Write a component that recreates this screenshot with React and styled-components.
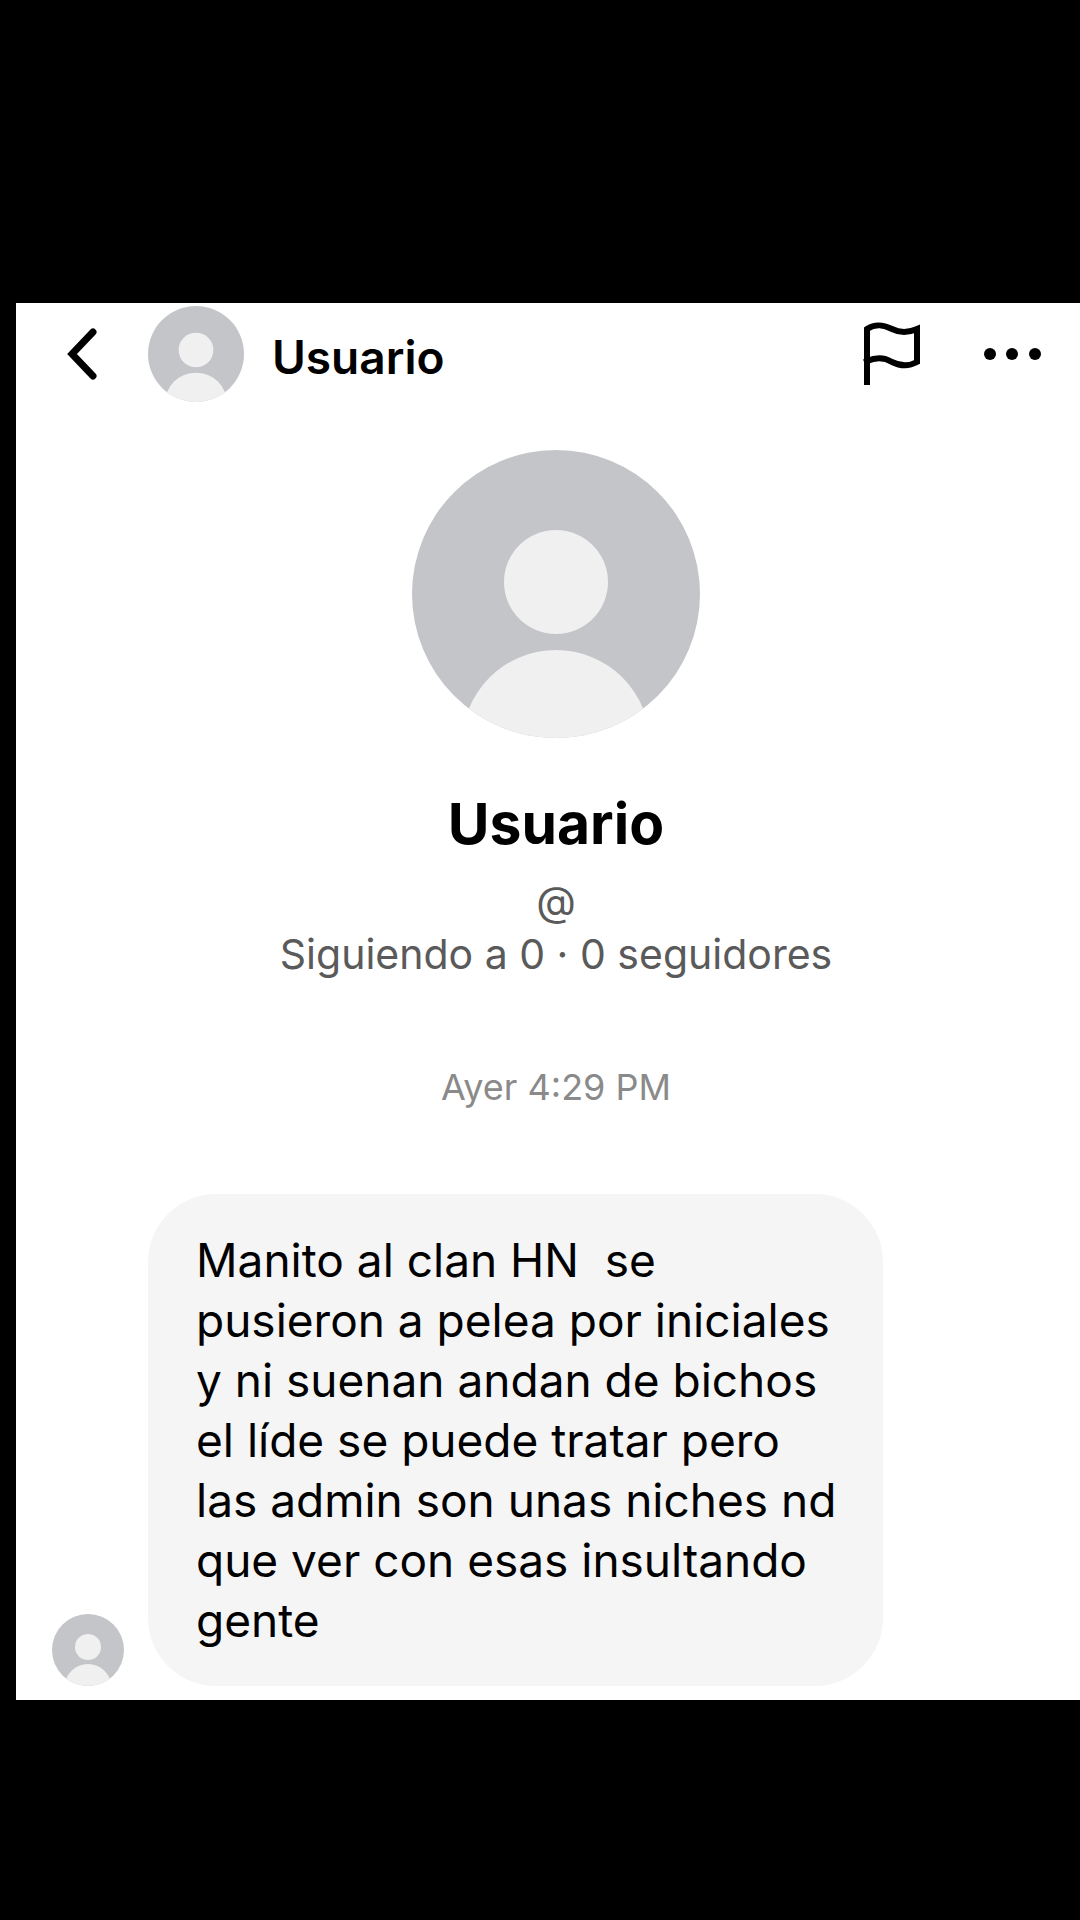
import React from "react";
import styled, { createGlobalStyle } from "styled-components";

const message =
  "Manito al clan HN  se pusieron a pelea por iniciales y ni suenan andan de bichos el líde se puede tratar pero las admin son unas niches nd que ver con esas insultando gente";

function UserAvatar({ size, id }) {
  return (
    <Avatar $size={size} viewBox="0 0 288 288" aria-hidden="true">
      <clipPath id={id}>
        <circle cx="144" cy="144" r="144" />
      </clipPath>
      <g clipPath={`url(#${id})`}>
        <rect width="288" height="288" fill="#c3c5c9" />
        <circle cx="144" cy="132" r="52" fill="#f0f0f0" />
        <circle cx="144" cy="294" r="94" fill="#f0f0f0" />
      </g>
    </Avatar>
  );
}

function App() {
  return (
    <Screen>
      <GlobalStyle />
      <Chat>
        <Header>
          <IconButton aria-label="Volver">
            <svg width="34" height="56" viewBox="0 0 34 56" fill="none">
              <path
                d="M27 6 L6 28 L27 50"
                stroke="#000"
                strokeWidth="7"
                strokeLinecap="round"
                strokeLinejoin="miter"
              />
            </svg>
          </IconButton>
          <Contact>
            <UserAvatar size={96} id="avatar-header" />
            <ContactName>Usuario</ContactName>
          </Contact>
          <Actions>
            <IconButton aria-label="Reportar">
              <svg width="58" height="64" viewBox="0 0 58 64" fill="none">
                <path
                  d="M4 60 V7 C13 1 21 3 29 7 C37 11 45 11 54 7 V40 C45 45 37 44 29 40 C21 35 13 35 4 39"
                  stroke="#000"
                  strokeWidth="6"
                  strokeLinecap="square"
                  strokeLinejoin="miter"
                />
              </svg>
            </IconButton>
            <IconButton aria-label="Más opciones">
              <svg width="58" height="12" viewBox="0 0 58 12">
                <circle cx="7" cy="6" r="6" />
                <circle cx="29" cy="6" r="6" />
                <circle cx="52" cy="6" r="6" />
              </svg>
            </IconButton>
          </Actions>
        </Header>
        <Profile>
          <UserAvatar size={288} id="avatar-profile" />
          <ProfileName>Usuario</ProfileName>
          <ProfileLine>@</ProfileLine>
          <ProfileLine>Siguiendo a 0 · 0 seguidores</ProfileLine>
          <Timestamp>Ayer 4:29 PM</Timestamp>
        </Profile>
        <MessageRow>
          <UserAvatar size={72} id="avatar-message" />
          <Bubble>{message}</Bubble>
        </MessageRow>
      </Chat>
    </Screen>
  );
}

const GlobalStyle = createGlobalStyle`
  body {
    margin: 0;
    background: #000;
    font-family: Inter, "Liberation Sans", sans-serif;
  }
`;

const Screen = styled.div`
  box-sizing: border-box;
  display: flex;
  flex-direction: column;
  justify-content: center;
  min-height: 100vh;
  padding: 82px 0 0 16px;
  background: #000;
`;

const Chat = styled.main`
  display: flex;
  flex-direction: column;
  background: #fff;
  color: #000;
`;

const Header = styled.header`
  display: flex;
  align-items: center;
  padding: 3px 39px 0 50px;
`;

const IconButton = styled.button`
  display: flex;
  padding: 0;
  border: none;
  background: none;
  cursor: pointer;
`;

const Contact = styled.div`
  display: flex;
  flex: 1;
  align-items: center;
  gap: 28px;
  margin-left: 48px;
`;

const ContactName = styled.span`
  padding-top: 6px;
  font-size: 46px;
  font-weight: 600;
  line-height: 56px;
`;

const Actions = styled.div`
  display: flex;
  align-items: center;
  gap: 62px;
`;

const Avatar = styled.svg`
  display: block;
  flex-shrink: 0;
  width: ${(props) => props.$size}px;
  height: ${(props) => props.$size}px;
`;

const Profile = styled.section`
  display: flex;
  flex-direction: column;
  align-items: center;
  padding: 48px 0 0 16px;
`;

const ProfileName = styled.h1`
  margin: 50px 0 15px;
  font-size: 57px;
  font-weight: 700;
  line-height: 72px;
`;

const ProfileLine = styled.p`
  margin: 0;
  color: #5a5a5a;
  font-size: 41px;
  line-height: 53px;
`;

const Timestamp = styled.time`
  margin: 84px 0 85px;
  color: #8a8a8a;
  font-size: 36px;
  line-height: 44px;
`;

const MessageRow = styled.div`
  display: flex;
  align-items: flex-end;
  gap: 24px;
  padding: 0 36px 14px;
`;

const Bubble = styled.p`
  box-sizing: border-box;
  max-width: 735px;
  margin: 0;
  padding: 36px 40px 36px 48px;
  border-radius: 68px;
  background: #f5f5f5;
  font-size: 46px;
  line-height: 60px;
  white-space: pre-wrap;
`;

export default App;
